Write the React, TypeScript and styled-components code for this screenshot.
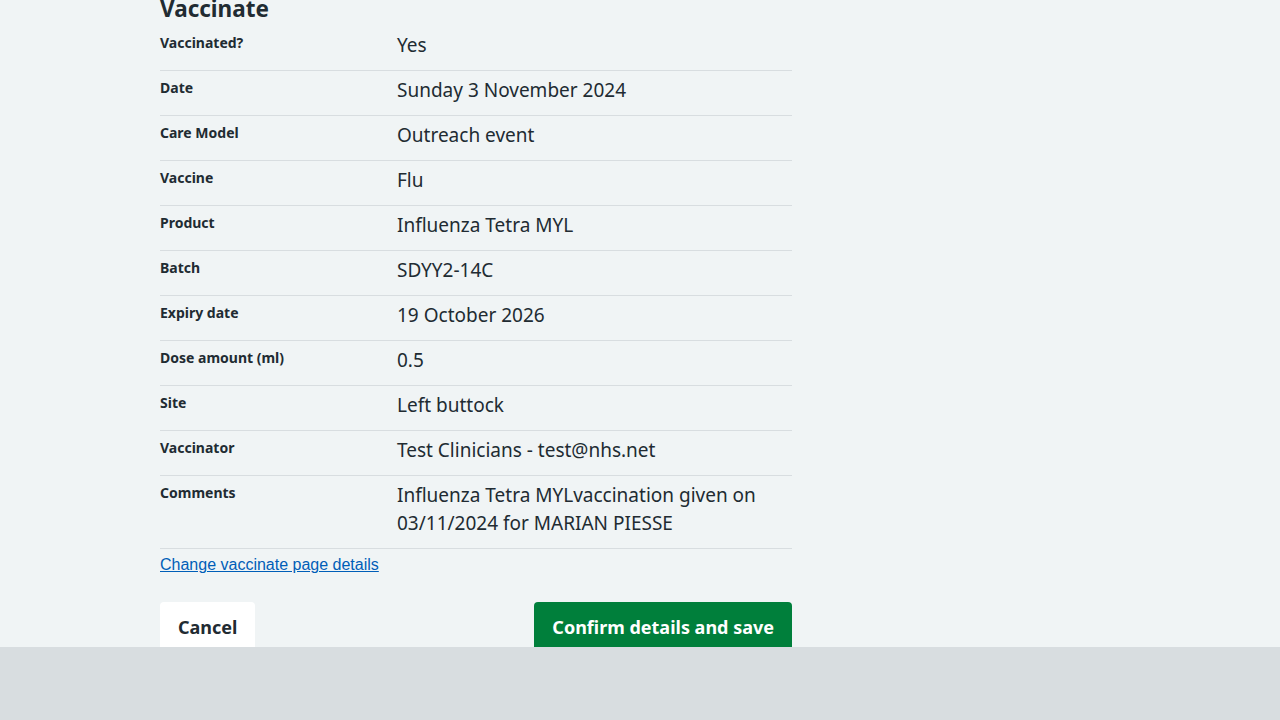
import React from "react";
import styled, { createGlobalStyle } from "styled-components";

const Global = createGlobalStyle`
  html, body { margin: 0; padding: 0; background: #f0f4f5; }
  body { font-family: "Noto Sans", "Open Sans", sans-serif; color: #212b32; }
  * { box-sizing: border-box; }
`;

const Page = styled.main`
  width: 632px;
  margin: -12px 0 0 160px;
  padding-bottom: 120px;
`;

const Heading = styled.h2`
  margin: 0;
  font-size: 22.5px;
  line-height: 38px;
  font-weight: 700;
  padding-top: 2px;
  height: 38px;
`;

const List = styled.dl`
  margin: 0;
`;

const Row = styled.div`
  display: grid;
  grid-template-columns: 237px 1fr;
  padding: 5px 0 11px;
  border-bottom: 1px solid #d8dde0;
`;

const Key = styled.dt`
  font-size: 14px;
  line-height: 24px;
  font-weight: 700;
`;

const Value = styled.dd`
  margin: 0;
  font-size: 19px;
  line-height: 28px;
`;

const ChangeLink = styled.a`
  display: inline-block;
  margin-top: 6px;
  font-family: "Liberation Sans", Arial, sans-serif;
  font-size: 16px;
  line-height: 20px;
  color: #005eb8;
  text-decoration: underline;
`;

const Actions = styled.div`
  display: flex;
  justify-content: space-between;
  margin-top: 27px;
`;

const Button = styled.button<{ $primary?: boolean }>`
  font-family: inherit;
  font-size: 18px;
  font-weight: 700;
  line-height: 24px;
  padding: 13px 18px;
  border: none;
  border-radius: 4px;
  cursor: pointer;
  background: ${(p) => (p.$primary ? "#007f3b" : "#ffffff")};
  color: ${(p) => (p.$primary ? "#ffffff" : "#212b32")};
  box-shadow: 0 4px 0 ${(p) => (p.$primary ? "#00401e" : "#aeb7bd")};
`;

const Footer = styled.footer`
  position: fixed;
  left: 0;
  right: 0;
  bottom: 0;
  height: 73px;
  background: #d8dde0;
`;

const rows: [string, string][] = [
  ["Vaccinated?", "Yes"],
  ["Date", "Sunday 3 November 2024"],
  ["Care Model", "Outreach event"],
  ["Vaccine", "Flu"],
  ["Product", "Influenza Tetra MYL"],
  ["Batch", "SDYY2-14C"],
  ["Expiry date", "19 October 2026"],
  ["Dose amount (ml)", "0.5"],
  ["Site", "Left buttock"],
  ["Vaccinator", "Test Clinicians - test@nhs.net"],
  ["Comments", "Influenza Tetra MYLvaccination given on 03/11/2024 for MARIAN PIESSE"],
];

export default function App() {
  return (
    <>
      <Global />
      <Page>
        <Heading>Vaccinate</Heading>
        <List>
          {rows.map(([k, v]) => (
            <Row key={k}>
              <Key>{k}</Key>
              <Value>{v}</Value>
            </Row>
          ))}
        </List>
        <ChangeLink href="#">Change vaccinate page details</ChangeLink>
        <Actions>
          <Button>Cancel</Button>
          <Button $primary>Confirm details and save</Button>
        </Actions>
      </Page>
      <Footer />
    </>
  );
}
